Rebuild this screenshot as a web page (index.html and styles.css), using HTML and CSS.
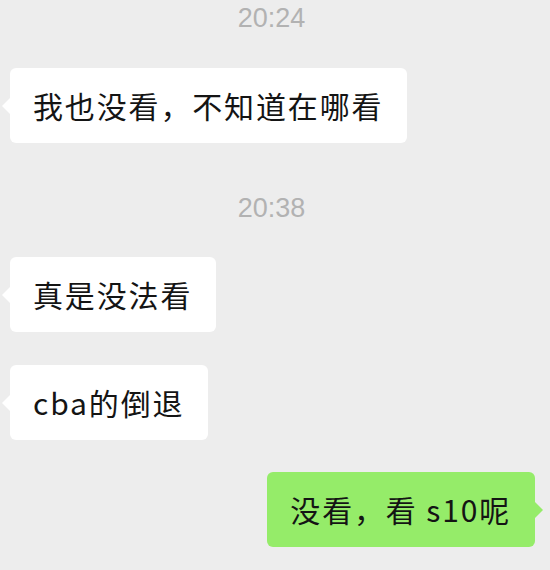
FILE: index.html
```html
<!DOCTYPE html>
<html lang="zh">
<head>
<meta charset="utf-8">
<link rel="stylesheet" href="styles.css">
</head>
<body>
<div class="chat">
  <div class="time t1">20:24</div>
  <div class="row left r1"><div class="bubble">我也没看，不知道在哪看</div></div>
  <div class="time t2">20:38</div>
  <div class="row left r2"><div class="bubble">真是没法看</div></div>
  <div class="row left r3"><div class="bubble">cba的倒退</div></div>
  <div class="row right r4"><div class="bubble green">没看，看 s10呢</div></div>
</div>
</body>
</html>
```
FILE: styles.css
```css
html, body {
  margin: 0;
  padding: 0;
  background: #ededed;
}
.chat {
  display: flex;
  flex-direction: column;
  width: 550px;
  height: 570px;
  overflow: hidden;
  font-family: "Noto Sans CJK SC", "Noto Sans", sans-serif;
}
.time {
  height: 36px;
  line-height: 36px;
  text-align: center;
  padding-right: 7px;
  font-family: "Liberation Sans", "Noto Sans", sans-serif;
  font-size: 27px;
  color: #b2b2b2;
}
.t2 { margin-top: 47px; }
.row { display: flex; }
.row.left { justify-content: flex-start; padding-left: 10px; }
.row.right { justify-content: flex-end; padding-right: 15px; }
.r1 { margin-top: 32px; }
.r2 { margin-top: 31px; }
.r3 { margin-top: 33px; }
.r4 { margin-top: 32px; }
.bubble {
  position: relative;
  background: #ffffff;
  border-radius: 6px;
  height: 75px;
  line-height: 75px;
  padding: 0 24px 0 23px;
  font-size: 30px;
  letter-spacing: 1.85px;
  color: #141414;
  white-space: nowrap;
}
.bubble::before {
  content: "";
  position: absolute;
  top: 50%;
  margin-top: -8px;
  border-style: solid;
  border-width: 8px;
  border-color: transparent;
}
.left .bubble::before {
  left: -16px;
  border-right-color: #ffffff;
}
.bubble.green {
  background: #95ec69;
}
.right .bubble::before {
  right: -16px;
  border-left-color: #95ec69;
}
```
